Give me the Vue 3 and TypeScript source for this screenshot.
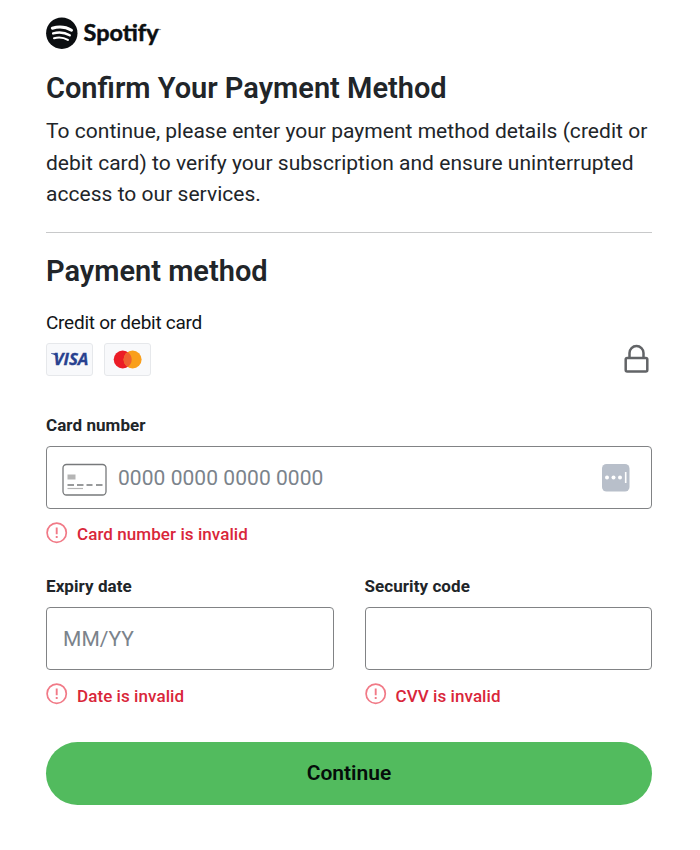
<script setup lang="ts">
interface DetailField {
  label: string
  placeholder: string
  error: string
}

const details: DetailField[] = [
  { label: 'Expiry date', placeholder: 'MM/YY', error: 'Date is invalid' },
  { label: 'Security code', placeholder: '', error: 'CVV is invalid' },
]
</script>

<template>
  <main class="page">
    <svg class="logo" width="120" height="34" viewBox="0 0 120 34">
      <circle cx="15.800" cy="17.200" r="15.700" fill="#0b0e11" />
      <g fill="none" stroke="#fff" stroke-linecap="round">
        <path d="M6.300 12.200c6.300-1.800 13.800-1.200 19.200 2" stroke-width="3" />
        <path d="M7.200 17.400c5.600-1.600 11.800-.9 16.500 1.900" stroke-width="2.500" />
        <path d="M8 22.200c4.800-1.200 9.800-.7 13.900 1.700" stroke-width="2" />
      </g>
      <text class="wordmark" x="37.500" y="25" textLength="75" lengthAdjust="spacingAndGlyphs">Spotify</text>
      <text class="trademark" x="112" y="16">™</text>
    </svg>

    <h1 class="title">Confirm Your Payment Method</h1>
    <p class="intro">
      To continue, please enter your payment method details (credit or<br />
      debit card) to verify your subscription and ensure uninterrupted<br />
      access to our services.
    </p>

    <h2 class="subtitle">Payment method</h2>
    <p class="kind">Credit or debit card</p>

    <div class="brands">
      <span class="brand">
        <svg width="45" height="31" viewBox="0 0 45 31">
          <text class="visa" x="6.500" y="21" textLength="35" lengthAdjust="spacingAndGlyphs">VISA</text>
          <path d="M4 9.200h5.500l2 5C10 12.100 7.500 10.500 4 9.800z" fill="#28418f" />
        </svg>
      </span>
      <span class="brand brand-second">
        <svg width="45" height="31" viewBox="0 0 45 31">
          <circle cx="17.700" cy="15.500" r="9" fill="#eb1c26" />
          <circle cx="27.600" cy="15.500" r="9" fill="#f99f1b" />
          <path d="M22.650 7.980a9 9 0 0 1 0 15.040a9 9 0 0 1 0-15.040z" fill="#ef6030" />
        </svg>
      </span>
      <svg class="lock" width="26" height="30" viewBox="0 0 26 30" fill="none" stroke="#626467" stroke-width="2.500">
        <rect x="1.700" y="14" width="21.600" height="13.500" rx="1.500" />
        <path d="M5.500 14V9a7 7 0 0 1 14 0v5" />
      </svg>
    </div>

    <div class="field">
      <span class="label">Card number</span>
      <div class="box">
        <svg class="card" width="46" height="33" viewBox="0 0 46 33">
          <rect x="1" y="1.500" width="43" height="30.500" rx="3.500" fill="#fff" stroke="#77797b" stroke-width="1.300" />
          <rect x="5.500" y="11.500" width="8" height="5" fill="#b5b5b5" />
          <path d="M5.500 22h6.500m3 0h6.500m3 0h6m3.500 0h6.500" stroke="#77797b" stroke-width="1.700" />
          <path d="M5.500 25.500h15.500" stroke="#b5b5b5" stroke-width="1.200" />
        </svg>
        <span class="placeholder">0000 0000 0000 0000</span>
        <svg class="keys" width="28" height="28" viewBox="0 0 28 28">
          <rect width="27.500" height="27.500" rx="4.500" fill="#b8bfca" />
          <circle cx="5" cy="13.500" r="2" fill="#fff" />
          <circle cx="11.500" cy="13.500" r="2" fill="#fff" />
          <circle cx="18" cy="13.500" r="2" fill="#fff" />
          <path d="M23.700 8v11" stroke="#fff" stroke-width="1.600" />
        </svg>
      </div>
      <div class="error">
        <svg width="22" height="22" viewBox="0 0 22 22" fill="none" stroke="#f17a87">
          <circle cx="10.700" cy="10.700" r="9.600" stroke-width="1.700" />
          <path d="M10.700 5.500v6.700m0 1.800v2" stroke-width="1.900" />
        </svg>
        <span>Card number is invalid</span>
      </div>
    </div>

    <div class="columns">
      <div v-for="item in details" :key="item.label" class="field">
        <span class="label">{{ item.label }}</span>
        <div class="box"><span class="placeholder">{{ item.placeholder }}</span></div>
        <div class="error">
          <svg width="22" height="22" viewBox="0 0 22 22" fill="none" stroke="#f17a87">
            <circle cx="10.700" cy="10.700" r="9.600" stroke-width="1.700" />
            <path d="M10.700 5.500v6.700m0 1.800v2" stroke-width="1.900" />
          </svg>
          <span>{{ item.error }}</span>
        </div>
      </div>
    </div>

    <div class="continue">Continue</div>
  </main>
</template>

<style>
body {
  background: #fff;
}
</style>

<style scoped>
.page {
  box-sizing: border-box;
  width: 700px;
  height: 850px;
  padding: 16px 48px 0 46px;
  font-family: Roboto, "Liberation Sans", sans-serif;
  color: #212529;
}
.logo {
  display: block;
}
.wordmark {
  font: 700 22.500px Lato, sans-serif;
  fill: #0b0e11;
  stroke: #0b0e11;
  stroke-width: 0.500px;
}
.trademark {
  font: 4px Lato, sans-serif;
  fill: #0b0e11;
}
.title,
.subtitle {
  margin: 0;
  font-size: 29px;
  font-weight: 600;
  line-height: 36px;
  white-space: nowrap;
}
.title {
  margin-top: 20px;
}
.intro {
  margin: 10px 0 0;
  padding-bottom: 21px;
  border-bottom: 1px solid #c8c9ca;
  font-size: 21px;
  letter-spacing: 0.030px;
  line-height: 31.670px;
  white-space: nowrap;
}
.subtitle {
  margin-top: 20px;
}
.kind {
  margin: 21px 0 0;
  font-size: 19px;
  letter-spacing: -0.260px;
  line-height: 26px;
  color: #111417;
}
.brands {
  display: flex;
  align-items: center;
  height: 34px;
  margin-top: 6px;
}
.brand {
  display: flex;
  border: 1px solid #e6e8eb;
  border-radius: 3px;
  background: #f8f9fb;
}
.brand-second {
  margin-left: 11px;
}
.visa {
  font: italic 700 16.500px "Open Sans", sans-serif;
  fill: #28418f;
  stroke: #28418f;
  stroke-width: 0.300px;
}
.lock {
  margin-left: auto;
  margin-right: 2px;
}
.field {
  display: flex;
  flex-direction: column;
}
.brands + .field {
  margin-top: 38px;
}
.label {
  font-size: 17px;
  font-weight: 700;
  letter-spacing: 0.070px;
  line-height: 22px;
}
.box {
  box-sizing: border-box;
  display: flex;
  align-items: center;
  height: 63px;
  margin-top: 10px;
  padding: 0 21px 0 16px;
  border: 1px solid #818385;
  border-radius: 4px;
}
.card {
  margin: 4px 10px 0 -1px;
}
.placeholder {
  font-size: 21px;
  letter-spacing: 0.050px;
  color: #7b838b;
}
.keys {
  margin-left: auto;
}
.error {
  display: flex;
  gap: 9px;
  height: 24px;
  margin-top: 13px;
  font-size: 17px;
  font-weight: 500;
  letter-spacing: 0.070px;
  line-height: 25px;
  color: #d9263a;
}
.columns {
  display: grid;
  grid-template-columns: 1fr 1fr;
  gap: 31px;
  margin-top: 29px;
}
.columns .error {
  line-height: 27px;
}
.continue {
  box-sizing: border-box;
  display: flex;
  align-items: center;
  justify-content: center;
  height: 63px;
  margin-top: 35px;
  padding-bottom: 2px;
  border-radius: 32px;
  background: #52bb5e;
  color: #050d0a;
  font-size: 21px;
  font-weight: 600;
}
</style>
